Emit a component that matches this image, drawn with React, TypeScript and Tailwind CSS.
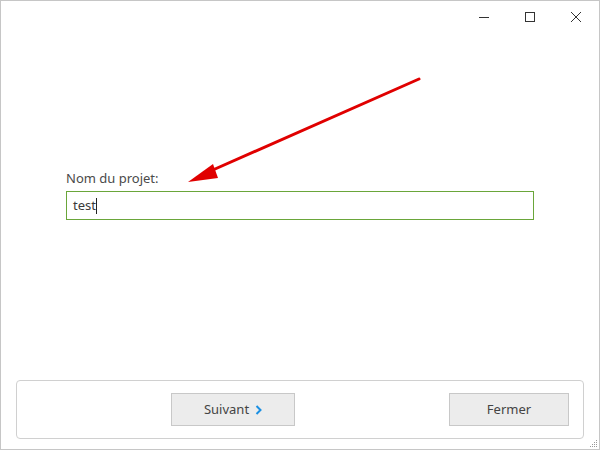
export default function App() {
  return (
    <div
      className="relative w-[600px] h-[450px] bg-white border border-[#c6c6c6] flex flex-col text-[#3c3c3c]"
      style={{ fontFamily: '"Noto Sans", "Open Sans", sans-serif' }}
    >
      {/* Title bar */}
      <div className="h-[32px] flex justify-end">
        <button className="w-[46px] h-[32px] flex items-center justify-center">
          <svg width="10" height="10" viewBox="0 0 10 10">
            <path d="M0 5.5h10" stroke="#333" strokeWidth="1" />
          </svg>
        </button>
        <button className="w-[46px] h-[32px] flex items-center justify-center">
          <svg width="10" height="10" viewBox="0 0 10 10">
            <rect x="0.5" y="0.5" width="9" height="9" fill="none" stroke="#333" strokeWidth="1" />
          </svg>
        </button>
        <button className="w-[46px] h-[32px] flex items-center justify-center">
          <svg width="10" height="10" viewBox="0 0 10 10">
            <path d="M0 0L10 10M10 0L0 10" stroke="#333" strokeWidth="1" />
          </svg>
        </button>
      </div>

      {/* Body */}
      <div className="flex-1 pl-[65px] pr-[65px] pt-[136px]">
        <label className="block text-[13px] leading-[18px] text-[#4a4a4a]">Nom du projet:</label>
        <div className="mt-[4px] h-[29px] border border-[#6aa63a] flex items-center pl-[6px] text-[13px] text-[#3a3a3a]">
          test<span className="inline-block w-px h-[16px] bg-[#222]" />
        </div>
      </div>

      {/* Footer panel */}
      <div className="mx-[15px] mb-[10px] h-[59px] border border-[#d0d0d0] rounded-[4px] flex items-center justify-between pl-[154px] pr-[14px]">
        <button className="w-[124px] h-[33px] bg-[#ececec] border border-[#c8c8c8] flex items-center justify-center gap-[6px] text-[13px] text-[#444]">
          Suivant
          <svg width="7" height="10" viewBox="0 0 7 10">
            <path d="M1.5 1l4 4-4 4" fill="none" stroke="#1a8fe3" strokeWidth="2" />
          </svg>
        </button>
        <button className="w-[120px] h-[33px] bg-[#ececec] border border-[#c8c8c8] flex items-center justify-center text-[13px] text-[#444]">
          Fermer
        </button>
      </div>

      {/* Resize grip */}
      <svg className="absolute right-[1px] bottom-[1px]" width="8" height="8" viewBox="0 0 8 8">
        <g fill="#999">
          <rect x="6" y="0" width="1" height="1" />
          <rect x="4" y="2" width="1" height="1" />
          <rect x="6" y="2" width="1" height="1" />
          <rect x="2" y="4" width="1" height="1" />
          <rect x="4" y="4" width="1" height="1" />
          <rect x="6" y="4" width="1" height="1" />
          <rect x="0" y="6" width="1" height="1" />
          <rect x="2" y="6" width="1" height="1" />
          <rect x="4" y="6" width="1" height="1" />
          <rect x="6" y="6" width="1" height="1" />
        </g>
      </svg>

      {/* Annotation arrow */}
      <svg className="absolute left-0 top-0 pointer-events-none" width="600" height="450" viewBox="0 0 600 450">
        <path d="M418 78L205 172" stroke="#e00000" strokeWidth="3" strokeLinecap="round" />
        <path d="M187 181L212 163L217 177Z" fill="#e00000" />
      </svg>
    </div>
  );
}
